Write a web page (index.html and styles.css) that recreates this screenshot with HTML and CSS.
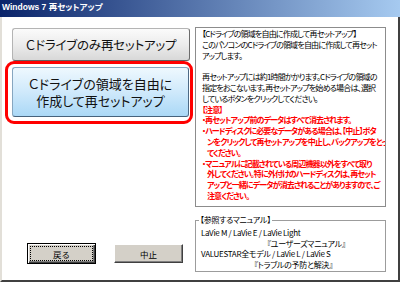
FILE: index.html
```html
<!DOCTYPE html>
<html lang="ja">
<head>
<meta charset="UTF-8">
<title>Windows 7 再セットアップ</title>
<link rel="stylesheet" href="styles.css">
</head>
<body>

<div class="window">
  <div class="titlebar">Windows 7 再セットアップ</div>

  <div class="main">
    <!-- left: choices -->
    <div class="left">
      <button class="big-btn">Ｃドライブのみ再セットアップ</button>
      <div class="ring">
        <button class="big-btn selected">Ｃドライブの領域を自由に<br>作成して再セットアップ</button>
      </div>
      <div class="actions">
        <button class="btn default">戻る</button>
        <button class="btn">中止</button>
      </div>
    </div>

    <!-- right: description -->
    <div class="right">
      <div class="info">
        <p>【Cドライブの領域を自由に作成して再セットアップ】<br>このパソコンのCドライブの領域を自由に作成して再セット<br>アップします。</p>
        <p class="tight">再セットアップには約1時間かかります。Cドライブの領域の<br>指定をおこないます。再セットアップを始める場合は、選択<br>しているボタンをクリックしてください。</p>
        <div class="warn">
          <div>【注意】</div>
          <div class="warn-item">・再セットアップ前のデータはすべて消去されます。</div>
          <div class="warn-item">・ハードディスクに必要なデータがある場合は、【中止】ボタ<br>ンをクリックして再セットアップを中止し、バックアップをとっ<br>てください。</div>
          <div class="warn-item">・マニュアルに記載されている周辺機器以外をすべて取り<br>外してください。特に外付けのハードディスクは、再セット<br>アップと一緒にデータが消去されることがありますので、ご<br>注意ください。</div>
        </div>
      </div>

      <div class="group">
        <div class="group-title">【参照するマニュアル】</div>
        <div class="group-body">
          <div>LaVie M / LaVie E / LaVie Light</div>
          <div class="m1">『ユーザーズマニュアル』</div>
          <div>VALUESTAR全モデル / LaVie L / LaVie S</div>
          <div class="m2">『トラブルの予防と解決』</div>
        </div>
      </div>
    </div>
  </div>
</div>

</body>
</html>
```

FILE: styles.css
```css
/* reset */
*{margin:0;padding:0;box-sizing:border-box}

body{
  font-family:"Noto Sans CJK JP",sans-serif;
  font-feature-settings:"palt";
  background:#fff;
  color:#000;
}

/* window frame */
.window{width:400px;height:282px;display:flex;flex-direction:column;background:#fff}
.titlebar{
  height:17px;line-height:17px;padding-left:2px;
  background:linear-gradient(90deg,#0a246a,#a6caf0);
  color:#fff;font:bold 8.5px "Liberation Sans","Noto Sans CJK JP",sans-serif;
  font-feature-settings:"palt";
}
.main{
  flex:1;display:flex;
  border-left:2px solid #e2dfd8;
  border-right:2px solid #404040;
  border-bottom:2px solid #404040;
}

/* left column */
.left{width:193px;flex-shrink:0;display:flex;flex-direction:column;padding:11px 0 16px 3px}
.big-btn{
  font-family:"Noto Sans CJK JP",sans-serif;font-feature-settings:"palt";
  font-size:12.5px;letter-spacing:-.2px;line-height:17px;color:#111;
  width:178px;height:33px;margin-left:7px;
  background:linear-gradient(#fbfbfb,#ececec 50%,#d8d8d8);
  border:1px solid;border-color:#b4b4b4 #6c6c6c #606060 #b4b4b4;
  border-radius:3px;
}
.ring{
  width:188px;height:63px;
  border:3px solid #f00;border-radius:9px;
  padding:3px 1px 4px 4px;
}
.big-btn.selected{
  width:177px;height:50px;margin-left:0;
  font-size:13px;letter-spacing:0;
  background:linear-gradient(#eef8fe,#cfe9fb 50%,#aad8f6);
  border-color:#86a6c0 #4c6a86 #46627c #86a6c0;
}
.actions{margin-top:auto;display:flex;align-items:center;gap:18px;padding-left:22px}
.btn{
  width:69px;height:19px;flex-shrink:0;font-size:8.5px;color:#000;
  font-family:"Noto Sans CJK JP",sans-serif;
  background:#d4d0c8;
  border:1px solid;border-color:#fff #404040 #404040 #fff;
  box-shadow:inset -1px -1px #808080;
}
.btn.default{
  height:21px;
  border:1px solid #000;
  box-shadow:inset 1px 1px #fff,inset -1px -1px #404040,inset -2px -2px #808080;
  outline:1px dotted #000;outline-offset:-4px;
}

/* right column */
.right{width:191px;flex-shrink:0;min-width:0;padding-top:10px;display:flex;flex-direction:column}
.info{
  height:180px;border:1px solid #8c8c8c;
  padding:1px 0 0 6px;
  font-size:8px;line-height:10.8px;letter-spacing:-.8px;
  white-space:nowrap;overflow:hidden;
}
.info p{margin-bottom:10.8px}
.info p.tight{margin-bottom:0}
.warn{color:#f00;font-weight:bold;letter-spacing:-.9px}
.warn-item{padding-left:5px;text-indent:-5px}

/* reference manuals group box */
.group{
  margin-top:13px;
  border:1px solid #9c9c9c;
  padding:0 0 1px 5px;
  font-size:8px;letter-spacing:-.3px;
  white-space:nowrap;
}
.group-title{width:fit-content;margin:-6px 0 0 -2px;padding:0 1px;background:#fff;line-height:10px}
.group-body{padding-top:3px;line-height:10.5px}
.group-body .m1{padding-left:66px}
.group-body .m2{padding-left:53px}
```
